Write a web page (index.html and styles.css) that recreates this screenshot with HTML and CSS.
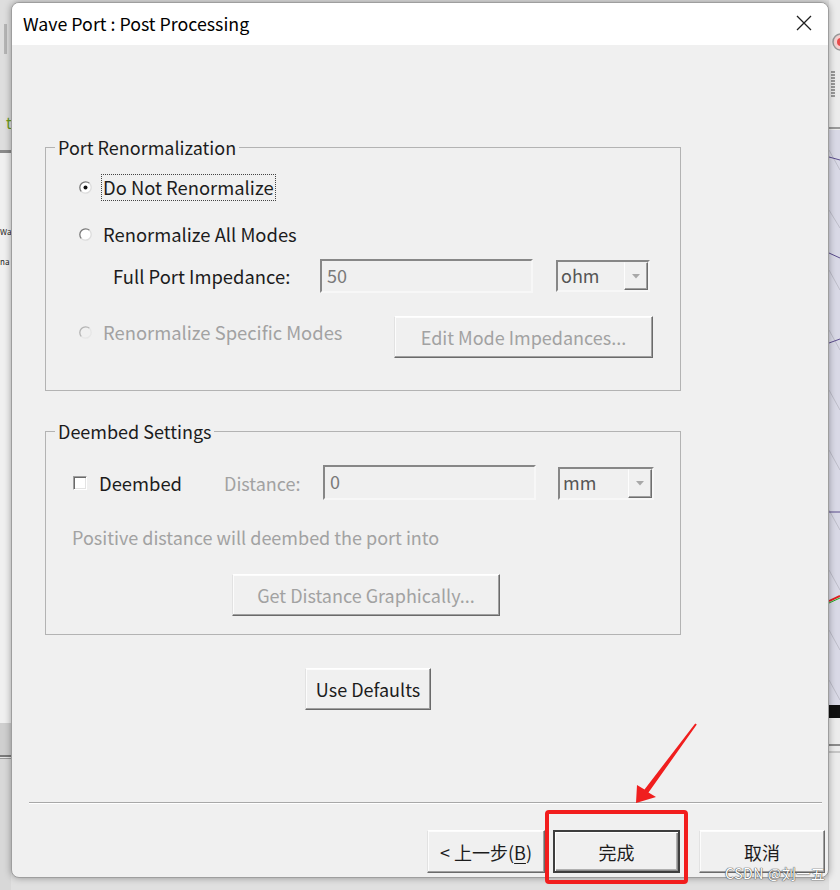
FILE: index.html
```html
<!DOCTYPE html>
<html>
<head>
<meta charset="utf-8">
<title>Wave Port : Post Processing</title>
<link rel="stylesheet" href="styles.css">
</head>
<body>
<div class="desktop">
  <div class="bgapp">
    <div class="bg-left">
      <div class="bl-top"><span class="bl-bar"></span><span class="bl-t">t</span></div>
      <div class="bl-line"></div>
      <div class="bl-mid"><span class="bl-txt">Wa</span><span class="bl-txt">na</span></div>
      <div class="bl-band"></div>
      <div class="bl-line2"></div>
      <div class="bl-bottom"></div>
    </div>
    <div class="bg-mid"></div>
    <div class="bg-right">
      <svg class="graph" width="11" height="890" viewBox="0 0 11 890">
        <rect x="0" y="0" width="11" height="890" fill="#ececec"/>
        <circle cx="12" cy="42" r="8" fill="#f3d0d0" stroke="#999" stroke-width="1.5"/>
        <circle cx="12" cy="42" r="4" fill="#e84a4a"/>
        <g stroke="#444" stroke-width="1">
          <line x1="2" y1="72" x2="6" y2="72"/><line x1="2" y1="75" x2="6" y2="75"/><line x1="2" y1="78" x2="6" y2="78"/>
          <line x1="2" y1="81" x2="6" y2="81"/><line x1="2" y1="84" x2="6" y2="84"/><line x1="2" y1="87" x2="6" y2="87"/>
          <line x1="2" y1="90" x2="6" y2="90"/><line x1="2" y1="93" x2="6" y2="93"/><line x1="2" y1="96" x2="6" y2="96"/>
        </g>
        <line x1="0" y1="128" x2="11" y2="128" stroke="#9a9a9a" stroke-width="2"/>
        <rect x="0" y="130" width="11" height="575" fill="#d9d9e6"/>
        <g stroke="#bdbdc8" stroke-width="1">
          <line x1="0" y1="150" x2="11" y2="170"/><line x1="0" y1="210" x2="11" y2="228"/><line x1="0" y1="270" x2="11" y2="290"/>
          <line x1="0" y1="330" x2="11" y2="350"/><line x1="0" y1="390" x2="11" y2="410"/><line x1="0" y1="450" x2="11" y2="470"/>
          <line x1="0" y1="510" x2="11" y2="530"/><line x1="0" y1="570" x2="11" y2="590"/><line x1="0" y1="630" x2="11" y2="650"/>
          <line x1="0" y1="680" x2="11" y2="700"/>
        </g>
        <path d="M0 157 L11 160" stroke="#5a4c8c" stroke-width="1" fill="none"/>
        <path d="M0 253 L11 258" stroke="#5a4c8c" stroke-width="1" fill="none"/>
        <path d="M0 343 L11 339" stroke="#5a4c8c" stroke-width="1" fill="none"/>
        <path d="M0 512 L11 512" stroke="#5a4c8c" stroke-width="1" fill="none"/>
        <path d="M0 601 L11 596" stroke="#d22" stroke-width="2" fill="none"/>
        <path d="M0 603 L11 598" stroke="#2a2" stroke-width="1" fill="none"/>
        <rect x="0" y="705" width="11" height="13" fill="#111"/>
        <line x1="0" y1="745" x2="11" y2="745" stroke="#8a8a8a" stroke-width="2"/>
        <line x1="0" y1="752" x2="11" y2="752" stroke="#a0a0a0" stroke-width="1"/>
      </svg>
    </div>
  </div>

  <div class="window">
    <div class="titlebar">
      <span class="title">Wave Port : Post Processing</span>
      <svg class="close" width="16" height="16" viewBox="0 0 16 16">
        <path d="M1 1 L15 15 M15 1 L1 15" stroke="#1f1f1f" stroke-width="1.3" fill="none"/>
      </svg>
    </div>
    <div class="client">
      <div class="content">
        <fieldset class="group g1">
          <legend>Port Renormalization</legend>
          <div class="row r1">
            <svg class="radio" width="13" height="13" viewBox="0 0 13 13">
              <circle cx="6.5" cy="6.5" r="5.8" fill="#fff"/>
              <path d="M2.4 10.6 A5.8 5.8 0 0 1 10.6 2.4" stroke="#7a7a7a" stroke-width="1.3" fill="none"/>
              <path d="M10.6 2.4 A5.8 5.8 0 0 1 2.4 10.6" stroke="#dcdcdc" stroke-width="1.3" fill="none"/>
              <circle cx="6.5" cy="6.5" r="2" fill="#111"/>
            </svg>
            <span class="lbl focus">Do Not Renormalize</span>
          </div>
          <div class="row r2">
            <svg class="radio" width="13" height="13" viewBox="0 0 13 13">
              <circle cx="6.5" cy="6.5" r="5.8" fill="#fff"/>
              <path d="M2.4 10.6 A5.8 5.8 0 0 1 10.6 2.4" stroke="#7a7a7a" stroke-width="1.3" fill="none"/>
              <path d="M10.6 2.4 A5.8 5.8 0 0 1 2.4 10.6" stroke="#dcdcdc" stroke-width="1.3" fill="none"/>
            </svg>
            <span class="lbl">Renormalize All Modes</span>
          </div>
          <div class="row r3">
            <span class="field-label">Full Port Impedance:</span>
            <div class="edit">50</div>
            <div class="combo">
              <span class="combo-val">ohm</span>
              <span class="combo-btn"><svg width="8" height="5" viewBox="0 0 8 5"><path d="M0 0 H8 L4 4.5 Z" fill="#a8a8a8"/></svg></span>
            </div>
          </div>
          <div class="row r4">
            <div class="opt">
              <svg class="radio" width="13" height="13" viewBox="0 0 13 13">
                <circle cx="6.5" cy="6.5" r="5.8" fill="#f0f0f0"/>
                <path d="M2.4 10.6 A5.8 5.8 0 0 1 10.6 2.4" stroke="#b4b4b4" stroke-width="1.3" fill="none"/>
                <path d="M10.6 2.4 A5.8 5.8 0 0 1 2.4 10.6" stroke="#e6e6e6" stroke-width="1.3" fill="none"/>
              </svg>
              <span class="lbl disabled">Renormalize Specific Modes</span>
            </div>
            <div class="btn disabled edit-modes">Edit Mode Impedances...</div>
          </div>
        </fieldset>

        <fieldset class="group g2">
          <legend>Deembed Settings</legend>
          <div class="row d1">
            <span class="check"></span>
            <span class="deembed-lbl">Deembed</span>
            <span class="dist-lbl disabled">Distance:</span>
            <div class="edit">0</div>
            <div class="combo combo-mm">
              <span class="combo-val">mm</span>
              <span class="combo-btn"><svg width="8" height="5" viewBox="0 0 8 5"><path d="M0 0 H8 L4 4.5 Z" fill="#a8a8a8"/></svg></span>
            </div>
          </div>
          <div class="row d2 disabled">Positive distance will deembed the port into</div>
          <div class="row d3">
            <div class="btn disabled get-dist">Get Distance Graphically...</div>
          </div>
        </fieldset>

        <div class="btn use-defaults">Use Defaults</div>
      </div>
      <div class="sep"></div>
      <div class="footer">
        <div class="btn back">&lt; 上一步(<u>B</u>)</div>
        <div class="btn finish">完成</div>
        <div class="btn cancel">取消</div>
      </div>
    </div>
  </div>

  <div class="annot-box"></div>
  <svg class="annot-arrow" width="72" height="90" viewBox="0 0 72 90">
    <polygon points="65.2,5.4 66.8,6.6 18.5,74.5 26,79 6,85 7,67 14.5,71.5" fill="#f01e1e"/>
  </svg>
  <div class="watermark">CSDN @刘一五</div>
</div>
</body>
</html>
```

FILE: styles.css
```css
* { box-sizing: border-box; }
html, body { margin: 0; padding: 0; }
body {
  width: 840px;
  height: 890px;
  overflow: hidden;
  font-family: "Noto Sans CJK SC", "Noto Sans", sans-serif;
  color: #1c1c1c;
}

.desktop {
  position: relative;
  width: 840px;
  height: 890px;
  overflow: hidden;
  background: #e6e6e6;
}

/* background application behind the dialog */
.bgapp { display: flex; height: 100%; }
.bg-left { width: 11px; display: flex; flex-direction: column; overflow: hidden; }
.bl-top { height: 150px; background: #dedede; display: flex; flex-direction: column; padding-top: 24px; }
.bl-bar { width: 3px; height: 30px; margin-left: 4px; background: #b5b5b5; }
.bl-t { margin-top: 60px; margin-left: 6px; font-size: 15px; line-height: 18px; color: #6a9a1a; }
.bl-line { height: 3px; background: #8a8a8a; }
.bl-mid { height: 570px; background: #f0f0f0; display: flex; flex-direction: column; padding-top: 64px; }
.bl-txt { font-size: 8px; line-height: 30px; margin-left: 0; color: #222; white-space: nowrap; }
.bl-band { height: 32px; background: #cfcfcf; }
.bl-line2 { height: 4px; border-top: 2px solid #7a7a7a; border-bottom: 1px solid #999; }
.bl-bottom { flex: 1; background: #d8d8d8; }
.bg-mid { flex: 1; background: #e0e0e0; }
.bg-right { width: 11px; }
.graph { display: block; }

/* dialog window */
.window {
  position: absolute;
  left: 11px;
  top: 2px;
  width: 818px;
  height: 876px;
  border: 1px solid #9e9e9e;
  border-radius: 8px;
  background: #f0f0f0;
  overflow: hidden;
  box-shadow: 0 0 7px rgba(0, 0, 0, 0.35);
}

.titlebar {
  height: 42px;
  background: #ffffff;
  display: flex;
  align-items: center;
  justify-content: space-between;
  padding: 0 16px 0 11px;
}
.title { font-size: 17.8px; color: #000; line-height: 22px; margin-top: -3px; }
.close { display: block; margin-top: -2px; }

.content { padding-left: 33px; }

.group {
  margin: 0;
  width: 636px;
  min-width: 0;
  border: 1px solid #b3b3b3;
  padding: 0;
}
.group legend {
  margin-left: 9px;
  padding: 0 3px;
  font-size: 18px;
  line-height: 22px;
  color: #1c1c1c;
}

.row { display: flex; align-items: center; }

.g1 { margin-top: 91px; padding: 15px 0 32px 0; }
.r1 { height: 28px; padding-left: 33px; }
.r2 { height: 28px; margin-top: 19px; padding-left: 33px; }
.r3 { height: 34px; margin-top: 11px; padding-left: 67px; }
.r4 { height: 42px; margin-top: 23px; padding-left: 33px; align-items: flex-start; }

.radio { display: block; flex: none; margin-right: 9px; }
.lbl {
  font-size: 18.4px;
  line-height: 25px;
  padding: 0 1px;
  border: 1px dotted transparent;
  white-space: nowrap;
}
.focus { border-color: #444; }
.disabled { color: #a2a2a2; }

.field-label { width: 207px; font-size: 18.4px; line-height: 24px; white-space: nowrap; }

.edit {
  width: 213px;
  height: 34px;
  border: 2px solid;
  border-color: #878787 #f7f7f7 #f7f7f7 #878787;
  background: #f0f0f0;
  padding-left: 5px;
  font-size: 18px;
  line-height: 28px;
  color: #7a7a7a;
}

.combo {
  width: 94px;
  height: 32px;
  margin-left: 23px;
  border: 2px solid;
  border-color: #878787 #f7f7f7 #f7f7f7 #878787;
  background: #f0f0f0;
  display: flex;
  align-items: stretch;
}
.combo-val { flex: 1; padding-left: 3px; font-size: 18px; line-height: 27px; color: #555; }
.combo-btn {
  width: 24px;
  display: flex;
  align-items: center;
  justify-content: center;
  border: 1px solid;
  border-color: #f0f0f0 #6e6e6e #6e6e6e #fdfdfd;
  box-shadow: inset -1px -1px #a0a0a0;
}
.combo-btn svg { display: block; }

.opt { width: 315px; height: 32px; display: flex; align-items: center; }

.btn {
  display: flex;
  align-items: center;
  justify-content: center;
  height: 42px;
  font-size: 18px;
  white-space: nowrap;
  background: #f0f0f0;
  border: 1px solid;
  border-color: #ffffff #6a6a6a #6a6a6a #e2e2e2;
  box-shadow: inset -1px -1px #a0a0a0, inset 1px 1px #fcfcfc;
}
.btn.disabled { color: #a2a2a2; }
.edit-modes { width: 259px; }

.g2 { margin-top: 29px; padding: 23px 0 18px 0; }
.d1 { height: 35px; padding-left: 27px; }
.check {
  width: 14px;
  height: 14px;
  flex: none;
  background: #fff;
  border: 1px solid;
  border-color: #a0a0a0 #ffffff #ffffff #a0a0a0;
  box-shadow: inset 1px 1px #6a6a6a, inset -1px -1px #e3e3e3;
  margin-right: 12px;
}
.deembed-lbl { width: 125px; font-size: 18.4px; line-height: 24px; }
.dist-lbl { width: 99px; font-size: 18px; line-height: 24px; }
.d1 .edit { height: 35px; }
.combo-mm { width: 96px; height: 33px; margin-left: 22px; margin-top: 2px; }
.d2 { height: 22px; margin-top: 26px; padding-left: 26px; font-size: 18px; line-height: 22px; }
.d3 { height: 42px; margin-top: 26px; padding-left: 186px; }
.get-dist { width: 268px; }

.use-defaults { width: 126px; margin-top: 33px; margin-left: 260px; color: #1c1c1c; }

.sep {
  margin: 92px 6px 0 17px;
  height: 2px;
  border-top: 1px solid #a8a8a8;
  border-bottom: 1px solid #ffffff;
}

.footer {
  display: flex;
  align-items: flex-start;
  margin-top: 26px;
  padding-left: 415px;
}
.footer .btn { height: 43px; font-size: 18px; }
.back { width: 118px; }
.back u { text-decoration-thickness: 1px; text-underline-offset: 3px; }
.finish {
  width: 127px;
  margin-left: 8px;
  border: 2px solid #3e3e3e;
  box-shadow: inset 1px 1px #ffffff, inset -1px -1px #8a8a8a, inset -2px -2px #b0b0b0;
}
.cancel { width: 126px; margin-left: 19px; }

/* annotation overlays */
.annot-box {
  position: absolute;
  left: 545px;
  top: 810px;
  width: 143px;
  height: 74px;
  border: 4px solid #f21d1d;
  border-radius: 4px;
}
.annot-arrow { position: absolute; left: 630px; top: 718px; }
.watermark {
  position: absolute;
  left: 725px;
  top: 864px;
  font-size: 14px;
  line-height: 18px;
  color: #ffffff;
  text-shadow: 0 0 1px #555, 0 0 1px #555, 0 0 1px #555;
  white-space: nowrap;
  letter-spacing: 0.6px;
}
```
